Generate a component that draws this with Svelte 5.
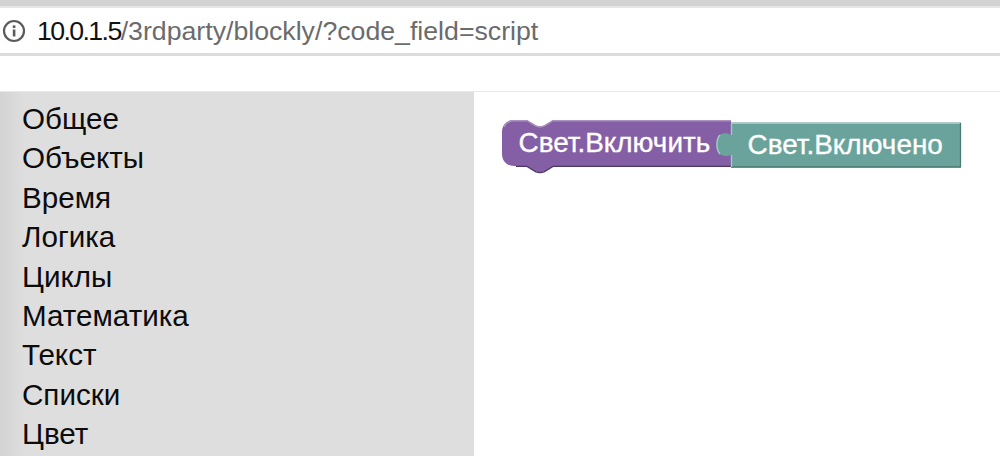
<script>
  const categories = ['Общее', 'Объекты', 'Время', 'Логика', 'Циклы', 'Математика', 'Текст', 'Списки', 'Цвет'];
</script>

<div class="page">
  <div class="chrome-top"></div>
  <div class="urlbar">
    <svg class="info" width="26" height="26" viewBox="0 0 26 26">
      <circle cx="13" cy="13" r="10" fill="none" stroke="#5a5a5a" stroke-width="2.2" />
      <rect x="11.8" y="11.5" width="2.6" height="7" fill="#5a5a5a" />
      <rect x="11.8" y="7.4" width="2.6" height="2.6" fill="#5a5a5a" />
    </svg>
    <span class="url"><span class="host">10.0.1.5</span>/3rdparty/blockly/?code_field=script</span>
  </div>
  <div class="gap"></div>

  <div class="workspace">
    <ul class="toolbox">
      {#each categories as name}
        <li>{name}</li>
      {/each}
    </ul>
    <div class="canvas">
      <svg class="blocks" width="526" height="100" viewBox="474 100 526 100">
        <!-- statement block -->
        <path d="M514 120 H527 L536 125.5 Q540 127 544 125.5 L553 120 H731 V166 H553 L544 171.5 Q540 173 536 171.5 L527 166 H514 C507 166 502 161 502 154 V132 C502 125 507 120 514 120 Z" fill="#855fa5" />
        <path d="M504 127 C506 122.5 510 120.7 514 120.7 H527 L536 126.2 Q540 127.7 544 126.2 L553 120.7 H731" stroke="#ab92c1" stroke-width="1.4" fill="none" />
        <path d="M731 166.4 H553 L544 171.9 Q540 173.4 536 171.9 L527 166.4 H516" stroke="#4d3766" stroke-width="1.4" fill="none" />
        <text class="label" x="518.5" y="152">Свет.Включить</text>
        <!-- value block, its tab lies over the statement block -->
        <path d="M731 122.5 H961 V167.5 H731 V155 C727 157 722 156 719 153.5 C715.5 150 715.5 139 719 135.5 C722 133 727 132.5 731 135 Z" fill="#6aa39c" />
        <path d="M731 123.2 H960.5" stroke="#a6c8c3" stroke-width="1.4" fill="none" />
        <path d="M731 167 H961 M960.5 123 V167" stroke="#4c7a74" stroke-width="1.3" fill="none" />
        <path d="M731.5 123 V135 M731.5 155 V167 M720 135 C716 139 716 150 720 154" stroke="#a6c8c3" stroke-width="1.4" fill="none" />
        <text class="label" x="747.5" y="154">Свет.Включено</text>
      </svg>
    </div>
  </div>
</div>

<style>
  :global(body) {
    margin: 0;
    background: #fff;
  }

  .page {
    width: 1000px;
    height: 456px;
    overflow: hidden;
    display: flex;
    flex-direction: column;
    font-family: "Liberation Sans", Arial, sans-serif;
  }

  .chrome-top {
    height: 8px;
    background: #d3d3d3;
    border-bottom: 2px solid #e6e6e6;
    box-sizing: border-box;
    flex: none;
  }

  .urlbar {
    height: 48px;
    flex: none;
    box-sizing: border-box;
    display: flex;
    align-items: center;
    padding-left: 1px;
    gap: 10px;
    background: #fff;
    border-bottom: 3px solid #dcdcdc;
  }

  .info {
    flex: none;
  }

  .url {
    font-size: 26.7px;
    color: #6b6b6b;
    white-space: nowrap;
    padding-top: 2px;
  }

  .host {
    color: #111;
    letter-spacing: -1.6px;
  }

  .gap {
    height: 35px;
    flex: none;
    background: #fff;
    border-bottom: 1px solid #e8e8e8;
  }

  .workspace {
    flex: 1;
    display: flex;
    min-height: 0;
  }

  .toolbox {
    width: 474px;
    margin: 0;
    padding: 7px 0 0 22px;
    box-sizing: border-box;
    list-style: none;
    background: linear-gradient(to right, #d3d3d3, #dedede 24px);
    overflow: hidden;
  }

  .toolbox li {
    font-size: 29.6px;
    line-height: 39.4px;
    color: #0c0c0c;
  }

  .canvas {
    flex: 1;
    position: relative;
    background: #fff;
  }

  .blocks {
    position: absolute;
    left: 0;
    top: 8px;
  }

  .label {
    font-family: "Liberation Sans", Arial, sans-serif;
    font-size: 27.9px;
    fill: #fff;
    stroke: #fff;
    stroke-width: 0.35px;
  }
</style>
